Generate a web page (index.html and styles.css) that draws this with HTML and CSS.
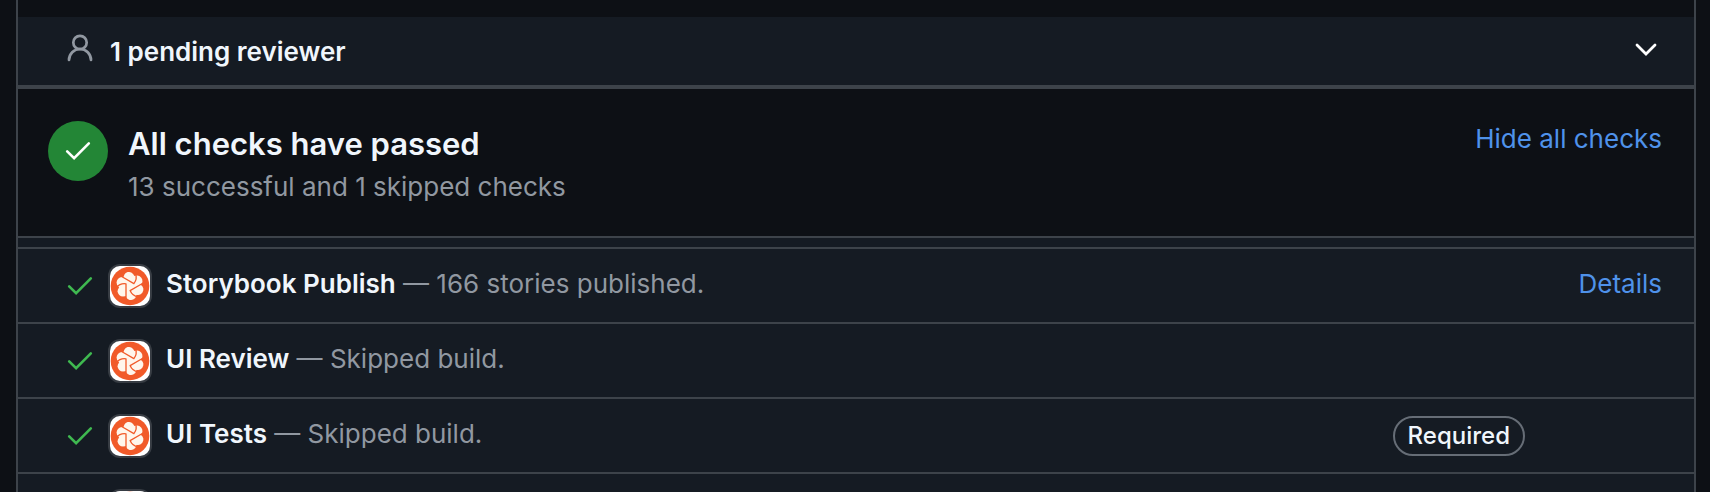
FILE: index.html
```
<!DOCTYPE html>
<html lang="en">
<head>
    <meta charset="UTF-8">
    <meta name="viewport" content="width=device-width, initial-scale=1.0">
    <title>Merge checks</title>
    <link rel="stylesheet" href="styles.css">
</head>
<body>
    <!-- Shared icons -->
    <svg class="sprite" aria-hidden="true">
        <symbol id="check" viewBox="0 0 24 24">
            <path d="M2 12.300 8.400 18.700 22 5" fill="none" stroke="currentColor" stroke-width="2.400" stroke-linecap="round" stroke-linejoin="miter"/>
        </symbol>
        <symbol id="chromatic" viewBox="0 0 40 40">
            <circle cx="20" cy="20" r="19.300" fill="#f15a29"/>
            <g fill="#fff6ec">
                <circle cx="20" cy="20" r="11"/>
                <g id="lobes">
                    <circle cx="13" cy="25.200" r="5.400"/>
                    <circle cx="12" cy="16.500" r="5.400"/>
                </g>
                <use href="#lobes" transform="rotate(120 20 20)"/>
                <use href="#lobes" transform="rotate(240 20 20)"/>
            </g>
            <g fill="none" stroke="#f15a29" stroke-width="1.300" stroke-linecap="round">
                <g id="seam">
                    <path d="M16 31.500V17.800M6.500 21.500Q10 17 16 17.800"/>
                </g>
                <use href="#seam" transform="rotate(120 20 20)"/>
                <use href="#seam" transform="rotate(240 20 20)"/>
            </g>
        </symbol>
    </svg>

    <main class="merge-box">
        <section class="reviewers">
            <svg class="icon-person" viewBox="0 0 26 28" aria-hidden="true">
                <g fill="none" stroke="currentColor" stroke-width="2.700" stroke-linecap="round">
                    <circle cx="13" cy="8.500" r="6.700"/>
                    <path d="M2 26a11 11 0 0 1 22 0"/>
                </g>
            </svg>
            <h2 class="reviewers-title">1 pending reviewer</h2>
            <button class="toggle" type="button" aria-label="Show reviewers">
                <svg viewBox="0 0 22 14" aria-hidden="true">
                    <path d="M2 2l9 9 9-9" fill="none" stroke="currentColor" stroke-width="2.800" stroke-linecap="round"/>
                </svg>
            </button>
        </section>

        <section class="summary">
            <span class="status">
                <svg aria-hidden="true"><use href="#check"/></svg>
            </span>
            <div class="summary-text">
                <h1>All checks have passed</h1>
                <p>13 successful and 1 skipped checks</p>
            </div>
            <button class="link" type="button">Hide all checks</button>
        </section>

        <ul class="checks">
            <li class="check">
                <svg class="icon-check" aria-hidden="true"><use href="#check"/></svg>
                <span class="avatar"><svg aria-hidden="true"><use href="#chromatic"/></svg></span>
                <p class="check-text"><strong>Storybook Publish</strong> — 166 stories published.</p>
                <a class="link" href="#">Details</a>
            </li>
            <li class="check">
                <svg class="icon-check" aria-hidden="true"><use href="#check"/></svg>
                <span class="avatar"><svg aria-hidden="true"><use href="#chromatic"/></svg></span>
                <p class="check-text"><strong>UI Review</strong> — Skipped build.</p>
            </li>
            <li class="check">
                <svg class="icon-check" aria-hidden="true"><use href="#check"/></svg>
                <span class="avatar"><svg aria-hidden="true"><use href="#chromatic"/></svg></span>
                <p class="check-text"><strong>UI Tests</strong> — Skipped build.</p>
                <span class="required">Required</span>
            </li>
            <li class="check">
                <span class="icon-check"></span>
                <span class="avatar"><svg aria-hidden="true"><use href="#chromatic"/></svg></span>
            </li>
        </ul>
    </main>
</body>
</html>
```
FILE: styles.css
```
* {
    box-sizing: border-box;
}

html {
    height: 100%;
    overflow: hidden;
}

body {
    height: 100%;
    margin: 0;
    padding: 0 14px 0 16px;
    overflow: hidden;
    background-color: #0d1015;
    color: #f0f6fc;
    font-family: Inter, sans-serif;
    font-size: 26px;
    line-height: 36px;
}

h1, h2, p, ul {
    margin: 0;
    padding: 0;
}

.sprite {
    position: absolute;
    width: 0;
    height: 0;
}

.merge-box {
    padding-top: 17px;
    border: solid #3d434a;
    border-width: 0 2px;
}

/* Pending reviewers bar */
.reviewers {
    display: flex;
    align-items: center;
    padding: 17px 37px 15px 49px;
    background-color: #151b23;
    border-bottom: 4px solid #3d434a;
}

.icon-person {
    width: 26px;
    height: 28px;
    margin-bottom: 8px;
    color: #9198a1;
}

.reviewers-title {
    flex: 1;
    margin-left: 17px;
    font-size: 26px;
    font-weight: 600;
}

.toggle {
    display: flex;
    margin-bottom: 4px;
    padding: 0;
    border: 0;
    background: none;
    color: #ffffff;
    cursor: pointer;
}

.toggle svg {
    width: 22px;
    height: 14px;
}

/* Summary of all checks */
.summary {
    display: flex;
    align-items: flex-start;
    padding: 32px 32px 31px 30px;
    border-bottom: 2px solid #3d434a;
}

.status {
    display: flex;
    align-items: center;
    justify-content: center;
    width: 60px;
    height: 60px;
    border-radius: 50%;
    background-color: #238636;
    color: #ffffff;
}

.status svg {
    width: 26px;
    height: 26px;
}

.summary-text {
    flex: 1;
    margin-left: 20px;
    color: #9198a1;
}

.summary h1 {
    margin-bottom: 2px;
    color: #f0f6fc;
    font-size: 31px;
    font-weight: 600;
    line-height: 46px;
}

.link {
    padding: 0;
    border: 0;
    background: none;
    color: #4f92ea;
    font: inherit;
    text-decoration: none;
    cursor: pointer;
}

.link:hover {
    text-decoration: underline;
}

/* List of checks */
.checks {
    padding-top: 9px;
    background-color: #151b23;
    list-style: none;
}

.check {
    display: flex;
    align-items: flex-start;
    padding: 17px 32px 16px 49px;
    border-top: 2px solid #3d434a;
}

.icon-check {
    width: 26px;
    height: 40px;
    color: #3fb950;
}

.avatar {
    width: 40px;
    height: 40px;
    margin: 0 16px 0 17px;
    border-radius: 10px;
    background-color: #ffffff;
    box-shadow: 0 0 0 2px rgba(255, 255, 255, 0.15);
}

.avatar svg {
    display: block;
    width: 40px;
    height: 40px;
}

.check-text {
    flex: 1;
    color: #9198a1;
}

.check-text strong {
    color: #f0f6fc;
    font-weight: 600;
}

.required {
    margin-right: 137px;
    padding: 0 13px;
    border: 2px solid #666d76;
    border-radius: 20px;
    color: #f0f6fc;
    font-size: 24px;
    font-weight: 500;
}
```
